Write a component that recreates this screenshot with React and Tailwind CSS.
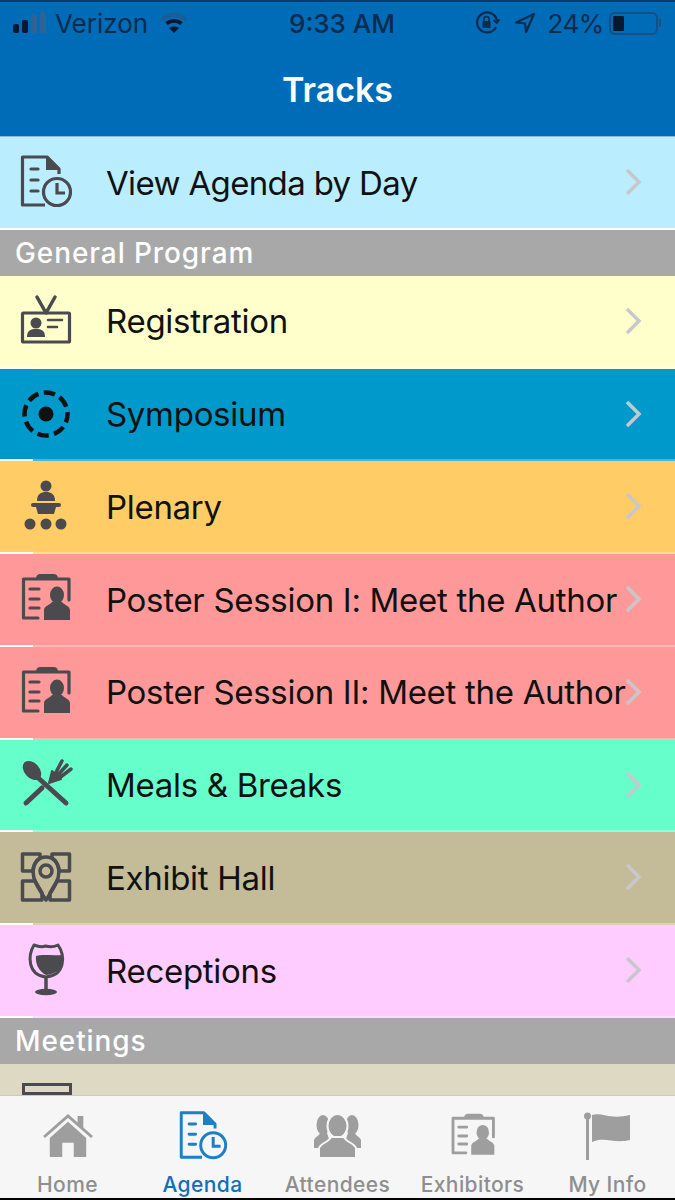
const ink = "#4a4a4f";

function AgendaIcon({ color = ink, size = 54 }) {
  return (
    <svg width={size} height={size} viewBox="0 0 54 54" fill="none" stroke={color} strokeWidth="3.200">
      <path d="M26 50H3.500V2H28L40 14V19" strokeLinejoin="round" />
      <path d="M28 3V14H39" fill={color} strokeWidth="2" />
      <path d="M12 14H19M12 25H19M12 36H19" strokeLinecap="round" />
      <circle cx="38" cy="37" r="13.500" />
      <path d="M38 28V38H46" />
    </svg>
  );
}

function RegistrationIcon() {
  return (
    <svg width="54" height="54" viewBox="0 0 54 54" fill="none" stroke={ink}>
      <path d="M18 3L27 19L36 3" strokeWidth="3.500" strokeLinecap="round" strokeLinejoin="round" />
      <rect x="3.500" y="19" width="47" height="29" strokeWidth="3.200" rx="1" />
      <circle cx="17" cy="29" r="5.500" fill={ink} stroke="none" />
      <path d="M8 43C8 36 12 35 17 35C22 35 26 36 26 43Z" fill={ink} stroke="none" />
      <path d="M29 26H43M29 33H38" strokeWidth="2.500" strokeLinecap="round" />
    </svg>
  );
}

function SymposiumIcon() {
  return (
    <svg width="54" height="54" viewBox="0 0 54 54" fill="none" stroke="#111">
      <circle cx="27" cy="27" r="21.500" strokeWidth="4.500" strokeDasharray="11.500 5.390" strokeDashoffset="3" />
      <circle cx="27" cy="27" r="7.500" fill="#111" stroke="none" />
    </svg>
  );
}

function PlenaryIcon() {
  return (
    <svg width="54" height="54" viewBox="0 0 54 54" fill={ink}>
      <circle cx="27" cy="6" r="5.500" />
      <path d="M18 21C18 14 22 12 27 12C32 12 36 14 36 21Z" />
      <rect x="12" y="23" width="30" height="4" rx="2" />
      <path d="M17 27H37L35 34H19Z" />
      <circle cx="11" cy="44" r="5.500" />
      <circle cx="27" cy="44" r="5.500" />
      <circle cx="42" cy="44" r="5.500" />
    </svg>
  );
}

function BadgeIcon({ color = ink, size = 54 }) {
  return (
    <svg width={size} height={size} viewBox="0 0 54 54" fill="none" stroke={color}>
      <path d="M19 46H4.500V7H50V28" strokeWidth="3.200" strokeLinejoin="round" strokeLinecap="round" />
      <path d="M17 7C17 3 19 2 22 2H34C37 2 39 3 39 7Z" fill={color} stroke="none" />
      <path d="M11 17H20M11 27H20M11 36H20" strokeWidth="3.200" strokeLinecap="round" />
      <ellipse cx="38" cy="23" rx="7" ry="8.500" fill={color} stroke="none" />
      <path d="M25 48V38C25 34 31 33 33 30H43C45 33 51 34 51 38V48Z" fill={color} stroke="none" />
    </svg>
  );
}

function MealsIcon() {
  return (
    <svg width="54" height="54" viewBox="0 0 54 54" fill="none" stroke={ink}>
      <ellipse cx="13" cy="12.500" rx="7.500" ry="11" transform="rotate(-42 13 12.500)" fill={ink} stroke="none" />
      <path d="M16 17L47 45" strokeWidth="5" strokeLinecap="round" />
      <path d="M7 45L23 30" strokeWidth="5" strokeLinecap="round" />
      <path d="M35 18L43 3M37 19L48 7M39 21L52 11" strokeWidth="3.500" strokeLinecap="round" />
      <path d="M30 25L33 13L42 21Z" fill={ink} strokeWidth="2" strokeLinejoin="round" />
    </svg>
  );
}

function ExhibitIcon() {
  return (
    <svg width="54" height="54" viewBox="0 0 54 54" fill="none" stroke={ink} strokeWidth="3.500" strokeLinejoin="round">
      <path d="M14 20H3.500V3H21V7C17 9 15 14 14 20Z" />
      <path d="M40 20H50.500V3H33V7C37 9 39 14 40 20Z" />
      <path d="M16 30H3.500V49H23V42Z" />
      <path d="M38 30H50.500V49H31V42Z" />
      <path d="M27 49C20 38 14 30 14 20C14 12 20 6 27 6C34 6 40 12 40 20C40 30 34 38 27 49Z" />
      <circle cx="27" cy="20" r="6" />
    </svg>
  );
}

function WineIcon() {
  return (
    <svg width="54" height="54" viewBox="0 0 54 54" fill="none" stroke={ink}>
      <path d="M15 2C20 4 24 4 26.500 3C30 4 35 4 39 2C46 12 47 32 27 34C8 32 9 12 15 2Z" strokeWidth="3" strokeLinejoin="round" />
      <path d="M17 13C24 11 33 13 43 12C44 25 38 31 27 32C21 29 16 22 17 13Z" fill={ink} stroke="none" />
      <path d="M27 34V47" strokeWidth="3.500" />
      <ellipse cx="27" cy="49" rx="11" ry="3.200" fill={ink} stroke="none" />
    </svg>
  );
}

function Chevron() {
  return (
    <svg width="18" height="28" viewBox="0 0 18 28" fill="none" stroke="#c8c8cc" strokeWidth="3.500" className="shrink-0">
      <path d="M3 2L15 14L3 26" />
    </svg>
  );
}

function Row({ label, bg, icon, sep = "bg-white/30", tracking = "tracking-[-0.3px]" }) {
  return (
    <div>
      <div className={`h-[90.75px] flex items-center relative ${bg}`}>
        <div className="w-[106px] shrink-0 flex justify-center pr-[14px]">{icon}</div>
        <span className={`text-[33px] pt-[2px] text-[#111] whitespace-nowrap ${tracking}`}>{label}</span>
        <div className="absolute right-[33px] top-[31px]">
          <Chevron />
        </div>
      </div>
      <div className={`h-[2px] flex ${bg}`}>
        <div className="w-[33px] bg-white" />
        <div className={`flex-1 ${sep}`} />
      </div>
    </div>
  );
}

function Section({ label }) {
  return (
    <div className="h-[46px] bg-[#a8a8a8] flex items-center pl-[15px] text-[28px] tracking-[0.9px] font-medium text-white">
      {label}
    </div>
  );
}

function Tab({ label, active, icon }) {
  return (
    <div className="flex-1 flex flex-col items-center">
      <div className="h-[50px] shrink-0 mt-[8px] flex items-center justify-center">{icon}</div>
      <span className={`text-[21px] font-medium tracking-[0.4px] mt-[8px] ${active ? "text-[#0f6fb9]" : "text-[#8e8e8e]"}`}>
        {label}
      </span>
    </div>
  );
}

export default function App() {
  return (
    <div className="w-[675px] h-[1200px] overflow-hidden flex flex-col bg-[#f6f6f6] font-['Inter','Liberation_Sans',sans-serif]">
      <div className="h-[137px] shrink-0 bg-[#006cb7] border-t-2 border-[#0a3a6b] border-b border-b-[#8fb8d8] flex flex-col">
        <div className="h-[42px] flex items-center text-[#0b2a4d] text-[26px] relative pl-[13px]">
          <svg width="36" height="22" viewBox="0 0 36 22" fill="#08182e">
            <rect x="0" y="12" width="6" height="9" rx="2" />
            <rect x="9" y="8" width="6" height="13" rx="2" />
            <rect x="18" y="3" width="6" height="18" rx="1" fill="#2a6596" />
            <rect x="27" y="0" width="6" height="21" rx="1" fill="#2a6596" />
          </svg>
          <span className="ml-[6px]">Verizon</span>
          <svg width="28" height="22" viewBox="0 0 28 22" fill="none" stroke="#08182e" strokeWidth="4" className="ml-[12px]">
            <path d="M2 8C9 1 19 1 26 8" stroke="#1c5c94" />
            <path d="M6.500 11.500C11 8 17 8 21.500 11.500" />
            <path d="M14 21L9 16C12 14 16 14 19 16Z" fill="#08182e" stroke="none" />
          </svg>
          <span className="absolute left-[289px] font-medium">9:33 AM</span>
          <div className="absolute right-[14px] flex items-center">
            <svg width="26" height="26" viewBox="0 0 26 26" fill="none" stroke="#0b2a4d" strokeWidth="2.200">
              <path d="M22 17A10 10 0 1 1 23 11" />
              <path d="M19.500 10L23 13L25.500 9.500" strokeWidth="1.800" />
              <rect x="8.500" y="11" width="8" height="7" rx="1" fill="#0b2a4d" stroke="none" />
              <path d="M10 11V9A2.500 2.500 0 0 1 15 9V11" strokeWidth="1.500" />
            </svg>
            <svg width="22" height="22" viewBox="0 0 22 22" fill="none" stroke="#0b2a4d" strokeWidth="2.200" strokeLinejoin="round" className="ml-[14px]">
              <path d="M20 2L2 10.500L11 11.500L12 20Z" />
            </svg>
            <span className="ml-[11px] tracking-[-0.4px]">24%</span>
            <div className="ml-[5px] w-[49px] h-[23px] rounded-[6px] border-2 border-[#184f82] p-[2px]">
              <div className="w-[11px] h-full bg-[#08182e] rounded-[1px]" />
            </div>
            <div className="w-[2px] h-[8px] bg-[#184f82] ml-[1px]" />
          </div>
        </div>
        <div className="flex-1 flex items-center justify-center pb-[2px] text-white text-[34px] font-semibold">Tracks</div>
      </div>

      <div className="flex-1 min-h-0 overflow-hidden">
        <Row label="View Agenda by Day" bg="bg-[#baeeff]" icon={<AgendaIcon />} sep="bg-white" tracking="tracking-[-0.65px]" />
        <Section label="General Program" />
        <Row label="Registration" bg="bg-[#ffffcc]" icon={<RegistrationIcon />} />
        <Row label="Symposium" bg="bg-[#0099cc]" icon={<SymposiumIcon />} />
        <Row label="Plenary" bg="bg-[#ffcc66]" icon={<PlenaryIcon />} />
        <Row label="Poster Session I: Meet the Author" bg="bg-[#ff9999]" icon={<BadgeIcon />} />
        <Row label="Poster Session II: Meet the Author" bg="bg-[#ff9999]" icon={<BadgeIcon />} />
        <Row label="Meals & Breaks" bg="bg-[#66ffcc]" icon={<MealsIcon />} />
        <Row label="Exhibit Hall" bg="bg-[#c4bc98]" icon={<ExhibitIcon />} />
        <Row label="Receptions" bg="bg-[#ffccff]" icon={<WineIcon />} />
        <Section label="Meetings" />
        <div className="h-[40px] bg-[#ded9c3] pt-[19px] pl-[22px]">
          <div className="w-[50px] h-[12px] border-[3px] border-[#4a4a4f]" />
        </div>
      </div>

      <div className="h-[105px] shrink-0 bg-[#f6f6f6] border-t border-[#c9c9c5] border-b-2 border-b-black flex pt-[7px] relative">
        <Tab
          label="Home"
          icon={
            <svg width="50" height="46" viewBox="0 0 52 48" fill="#9e9e9e">
              <path d="M36 3H42V18L36 13Z" />
              <path d="M1 25L26 3L51 25" fill="none" stroke="#9e9e9e" strokeWidth="3" />
              <path d="M7 26L26 9L45 26V46H32V31H20V46H7Z" />
            </svg>
          }
        />
        <Tab label="Agenda" active icon={<AgendaIcon color="#1f7fc4" size={50} />} />
        <Tab
          label="Attendees"
          icon={
            <svg width="47" height="44" viewBox="0 0 47 44" fill="#9e9e9e">
              <ellipse cx="9" cy="11" rx="6.500" ry="10" />
              <path d="M0 34V26C1 23 5 22 6 19H13L18 34Z" />
              <ellipse cx="38" cy="11" rx="6.500" ry="10" />
              <path d="M47 34V26C46 23 42 22 41 19H34L29 34Z" />
              <ellipse cx="23.500" cy="12" rx="10" ry="12" stroke="#f6f6f6" strokeWidth="2" />
              <path d="M5 44V34C7 29 15 28 17 23H30C32 28 40 29 42 34V44Z" stroke="#f6f6f6" strokeWidth="2" />
            </svg>
          }
        />
        <Tab label="Exhibitors" icon={<BadgeIcon color="#9e9e9e" size={48} />} />
        <Tab
          label="My Info"
          icon={
            <svg width="48" height="48" viewBox="0 0 48 48" fill="#9e9e9e">
              <circle cx="3.500" cy="4" r="3.500" />
              <rect x="2" y="4" width="3" height="44" />
              <path d="M8 3C18 0 26 8 46 3V28C30 32 20 24 8 30Z" />
            </svg>
          }
        />
      </div>
    </div>
  );
}
